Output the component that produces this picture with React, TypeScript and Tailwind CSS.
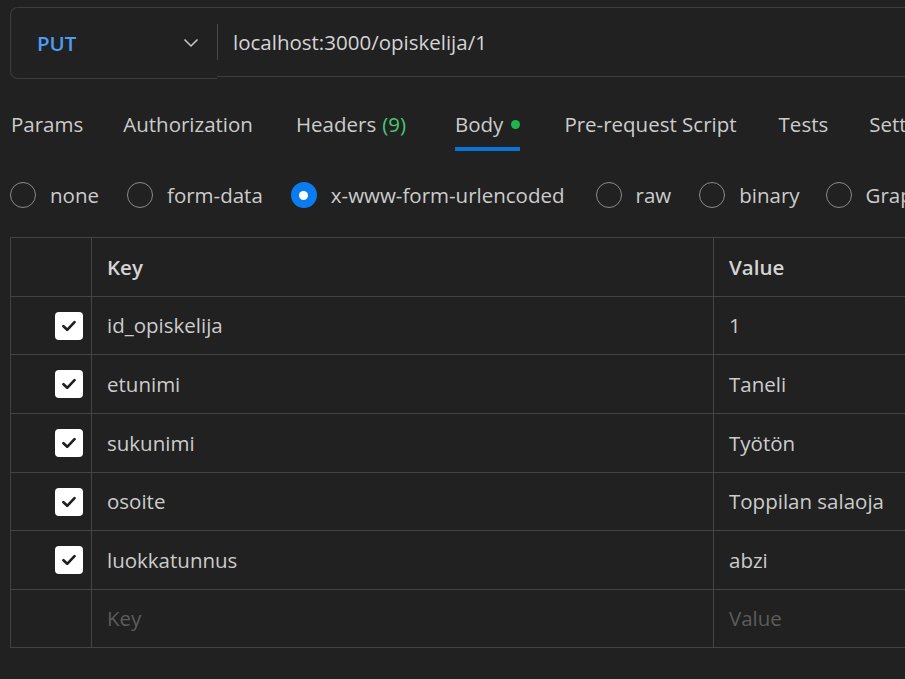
import React from 'react';

const tabs = [
  { label: 'Params', ml: 'ml-[11px]' },
  { label: 'Authorization', ml: 'ml-[40px]' },
  { label: 'Headers', ml: 'ml-[43px]', count: '(9)' },
  { label: 'Body', ml: 'ml-[49px]', active: true },
  { label: 'Pre-request Script', ml: 'ml-[44px]' },
  { label: 'Tests', ml: 'ml-[42px]' },
  { label: 'Settings', ml: 'ml-[41px]' },
];

const bodyTypes = [
  { label: 'none', ml: '' },
  { label: 'form-data', ml: 'ml-[28px]' },
  { label: 'x-www-form-urlencoded', ml: 'ml-[28px]' },
  { label: 'raw', ml: 'ml-[31px]' },
  { label: 'binary', ml: 'ml-[28px]' },
  { label: 'GraphQL', ml: 'ml-[26px]' },
];

const rows = [
  { key: 'id_opiskelija', value: '1', h: 'h-[58px]' },
  { key: 'etunimi', value: 'Taneli', h: 'h-[59px]' },
  { key: 'sukunimi', value: 'Työtön', h: 'h-[59px]' },
  { key: 'osoite', value: 'Toppilan salaoja', h: 'h-[58px]' },
  { key: 'luokkatunnus', value: 'abzi', h: 'h-[59px]' },
];

function Checkbox() {
  return (
    <div className="w-[28px] h-[28px] rounded-[4px] bg-white flex items-center justify-center">
      <svg width="14" height="12" viewBox="0 0 14 12" fill="none">
        <path d="M1.5 6.2 L5.2 9.8 L12.5 2.2" stroke="#1e1e1e" strokeWidth="2.6" strokeLinecap="round" strokeLinejoin="round" />
      </svg>
    </div>
  );
}

function Radio({ checked }: { checked?: boolean }) {
  if (checked) {
    return (
      <div className="w-[26px] h-[26px] rounded-full bg-[#0a7cf0] flex items-center justify-center shrink-0">
        <div className="w-[9px] h-[9px] rounded-full bg-white" />
      </div>
    );
  }
  return <div className="w-[26px] h-[26px] rounded-full border border-[#8a8a8a] shrink-0" />;
}

export default function App() {
  return (
    <div
      className="w-[905px] h-[679px] overflow-hidden bg-[#212121] text-[#cccccc] text-[20.5px]"
      style={{ fontFamily: '"Open Sans", "Noto Sans", sans-serif' }}
    >
      {/* request bar */}
      <div className="pt-[7px] pl-[10px] flex items-start w-[1100px]">
        <div className="w-[207px] h-[72px] border border-[#3d3d3d] border-r-0 rounded-l-[8px] flex items-center pl-[26px] pr-[18px] justify-between">
          <span className="text-[#4d9cf2] font-semibold">PUT</span>
          <svg width="16" height="10" viewBox="0 0 16 10" fill="none">
            <path d="M1.5 1.5 L8 8 L14.5 1.5" stroke="#cccccc" strokeWidth="1.5" />
          </svg>
        </div>
        <div className="flex-1 h-[70px] border-t border-b border-[#3d3d3d] flex items-center">
          <div className="w-px h-[36px] bg-[#4a4a4a]" />
          <span className="ml-[15px] text-[#d4d4d4]">localhost:3000/opiskelija/1</span>
        </div>
      </div>

      {/* tabs */}
      <div className="mt-[22px] h-[56px] flex items-start whitespace-nowrap">
        {tabs.map((t) => (
          <div key={t.label} className={`${t.ml} shrink-0 flex flex-col`}>
            <div className="h-[46px] flex items-center">
              <span>{t.label}</span>
              {t.count && <span className="ml-[6px] text-[#49c776]">{t.count}</span>}
              {t.active && <span className="ml-[8px] w-[9px] h-[9px] rounded-full bg-[#1fb44f]" />}
            </div>
            {t.active && <div className="h-[4px] bg-[#0a74d6]" />}
          </div>
        ))}
      </div>

      {/* body types */}
      <div className="mt-[13px] h-[50px] pl-[10px] flex items-center whitespace-nowrap">
        {bodyTypes.map((b) => (
          <div key={b.label} className={`flex items-center shrink-0 ${b.ml}`}>
            <Radio checked={b.label === 'x-www-form-urlencoded'} />
            <span className="ml-[14px]">{b.label}</span>
          </div>
        ))}
      </div>

      {/* table */}
      <div className="mt-[17px] ml-[10px] w-[1000px] border-t border-l border-[#444444]">
        <div className="flex h-[59px] border-b border-[#444444]">
          <div className="w-[81px] border-r border-[#444444]" />
          <div className="w-[622px] border-r border-[#444444] flex items-center pl-[15px] font-semibold text-[#d4d4d4]">Key</div>
          <div className="flex-1 flex items-center pl-[15px] font-semibold text-[#d4d4d4]">Value</div>
        </div>
        {rows.map((r) => (
          <div key={r.key} className={`flex ${r.h} border-b border-[#444444]`}>
            <div className="w-[81px] border-r border-[#444444] flex items-center justify-end pr-[8px]">
              <Checkbox />
            </div>
            <div className="w-[622px] border-r border-[#444444] flex items-center pl-[15px]">{r.key}</div>
            <div className="flex-1 flex items-center pl-[15px]">{r.value}</div>
          </div>
        ))}
        <div className="flex h-[58px] border-b border-[#444444]">
          <div className="w-[81px] border-r border-[#444444]" />
          <div className="w-[622px] border-r border-[#444444] flex items-center pl-[15px] text-[#5c5c5c]">Key</div>
          <div className="flex-1 flex items-center pl-[15px] text-[#5c5c5c]">Value</div>
        </div>
      </div>
    </div>
  );
}
